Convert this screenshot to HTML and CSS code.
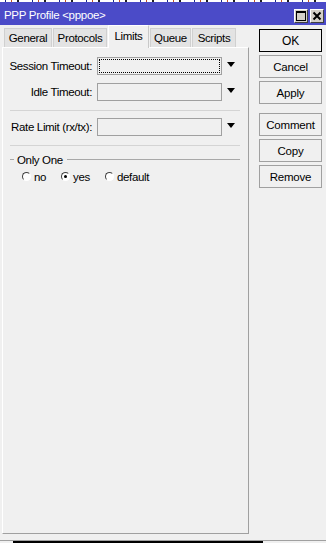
FILE: index.html
```html
<!DOCTYPE html>
<html>
<head>
<meta charset="utf-8">
<link rel="stylesheet" href="styles.css">
</head>
<body>
<div class="strip"></div>
<div class="titlebar">
  <span class="title">PPP Profile &lt;pppoe&gt;</span>
  <div class="tbtns">
    <span class="tbtn"><svg width="12" height="12" viewBox="0 0 12 12"><rect x="1.5" y="1.5" width="9" height="9" fill="none" stroke="#000" stroke-width="1"/><rect x="1" y="1" width="10" height="2" fill="#000"/></svg></span>
    <span class="tbtn"><svg width="12" height="12" viewBox="0 0 12 12"><path d="M2.5 2.5 L9.5 9.5 M9.5 2.5 L2.5 9.5" stroke="#000" stroke-width="2"/></svg></span>
  </div>
</div>
<div class="main">
  <div class="left">
    <div class="tabs">
      <span class="tab t-general">General</span>
      <span class="tab t-proto">Protocols</span>
      <span class="tab sel t-limits">Limits</span>
      <span class="tab t-queue">Queue</span>
      <span class="tab t-scripts">Scripts</span>
    </div>
    <div class="panel">
      <div class="row r1">
        <span class="label">Session Timeout:</span>
        <span class="field"><span class="focus"></span></span>
        <span class="arrow"></span>
      </div>
      <div class="row r2">
        <span class="label">Idle Timeout:</span>
        <span class="field"></span>
        <span class="arrow"></span>
      </div>
      <div class="sep s1"></div>
      <div class="row r3">
        <span class="label">Rate Limit (rx/tx):</span>
        <span class="field"></span>
        <span class="arrow"></span>
      </div>
      <div class="sep s2"></div>
      <div class="group">
        <span class="gl-left"></span>
        <span class="gtext">Only One</span>
        <span class="gl-right"></span>
      </div>
      <div class="radios">
        <span class="radio"><span class="dot"></span>no</span>
        <span class="radio"><span class="dot on"></span>yes</span>
        <span class="radio"><span class="dot"></span>default</span>
      </div>
    </div>
  </div>
  <div class="buttons">
    <span class="btn ok">OK</span>
    <span class="btn">Cancel</span>
    <span class="btn">Apply</span>
    <span class="btn gap">Comment</span>
    <span class="btn">Copy</span>
    <span class="btn">Remove</span>
  </div>
</div>
<div class="behind"><div class="bwin"></div></div>
</body>
</html>
```

FILE: styles.css
```css
* { box-sizing: border-box; }
html, body { margin: 0; padding: 0; }
body {
  width: 326px;
  height: 543px;
  overflow: hidden;
  background: #f0f0f0;
  font-family: "Liberation Sans", Arial, sans-serif;
  font-size: 11px;
  letter-spacing: -0.2px;
  color: #000;
}
.strip {
  height: 2px;
  background: repeating-linear-gradient(90deg, #fff 0 5px, #1a2a8a 5px 6px, #fff 6px 11px, #c05020 11px 12px, #fff 12px 17px, #202020 17px 19px, #fff 19px 27px);
}
.titlebar {
  height: 23px;
  background: #4b4bc8;
  display: flex;
  align-items: center;
  justify-content: space-between;
  padding: 0 2px 0 4px;
}
.title {
  color: #fff;
  font-size: 11.5px;
  letter-spacing: -0.3px;
  padding-top: 2px;
}
.tbtns { display: flex; gap: 2px; padding-top: 4px; }
.tbtn {
  width: 14px;
  height: 14px;
  background: #d4d0c8;
  border: 1px solid;
  border-color: #fff #404040 #404040 #fff;
  display: flex;
  align-items: center;
  justify-content: center;
}
.main {
  display: flex;
  height: 515px;
}
.left {
  width: 247px;
  margin-left: 2px;
  display: flex;
  flex-direction: column;
}
.tabs {
  height: 22px;
  display: flex;
  align-items: flex-end;
  padding-left: 2px;
  position: relative;
  z-index: 1;
}
.tab {
  height: 19px;
  background: #e3e3e3;
  border: 1px solid #d0d0d0;
  border-bottom: none;
  display: flex;
  align-items: center;
  justify-content: center;
  margin-right: 1px;
  font-size: 11.5px;
  letter-spacing: -0.35px;
}
.tab.sel {
  height: 23px;
  margin-bottom: -1px;
  background: #f0f0f0;
  border-color: #fff #c8c8c8 #f0f0f0 #fff;
  padding-bottom: 3px;
}
.t-general { width: 48px; }
.t-proto { width: 54px; }
.t-limits { width: 41px; }
.t-queue { width: 41px; }
.t-scripts { width: 44px; }
.panel {
  height: 487px;
  border: 1px solid;
  border-color: #fff #a0a0a0 #a0a0a0 #fff;
  padding-top: 9px;
  display: flex;
  flex-direction: column;
}
.row {
  display: flex;
  align-items: center;
  height: 18px;
}
.r2 { margin-top: 8px; }
.r3 { margin-top: 7px; }
.label {
  width: 89px;
  text-align: right;
  white-space: nowrap;
  font-size: 11.5px;
  letter-spacing: -0.35px;
}
.field {
  margin-left: 5px;
  width: 125px;
  height: 18px;
  background: #f0f0f0;
  border: 1px solid #a0a0a0;
  padding: 1px;
}
.focus {
  display: block;
  width: 100%;
  height: 100%;
  border: 1px dotted #000;
}
.arrow {
  margin-left: 5px;
  margin-bottom: 3px;
  width: 0;
  height: 0;
  border-left: 4.5px solid transparent;
  border-right: 4.5px solid transparent;
  border-top: 5px solid #000;
}
.sep {
  margin-left: 7px;
  width: 230px;
  height: 1px;
  background: #d4d4d4;
}
.s1 { margin-top: 9px; }
.s2 { margin-top: 9px; }
.group {
  margin-top: 7px;
  height: 13px;
  display: flex;
  align-items: center;
  margin-left: 7px;
  width: 230px;
  font-size: 11.5px;
  letter-spacing: -0.35px;
}
.gl-left { width: 4px; height: 1px; background: #a8a8a8; }
.gtext { margin: 0 4px 0 3px; }
.gl-right { flex: 1; height: 1px; background: #a8a8a8; }
.radios {
  margin-top: 4px;
  margin-left: 19px;
  height: 13px;
  display: flex;
  align-items: center;
  gap: 15px;
  font-size: 11.5px;
  letter-spacing: -0.35px;
}
.radio { display: flex; align-items: center; gap: 3px; }
.dot {
  width: 9px;
  height: 9px;
  border-radius: 50%;
  border: 1px solid;
  border-color: #404040 #fff #fff #404040;
  background: #fff;
  display: flex;
  align-items: center;
  justify-content: center;
}
.dot.on::after {
  content: "";
  width: 3px;
  height: 3px;
  border-radius: 50%;
  background: #000;
}
.buttons {
  margin-left: 10px;
  padding-top: 4px;
  display: flex;
  flex-direction: column;
  gap: 3px;
}
.btn {
  width: 63px;
  height: 23px;
  border: 1px solid #a0a0a0;
  background: #f0f0f0;
  display: flex;
  align-items: center;
  justify-content: center;
  font-size: 11.5px;
}
.btn.ok {
  border: 1px solid #000;
  box-shadow: inset 0 0 0 1px #f0f0f0;
  font-size: 12px;
}
.btn.gap { margin-top: 6px; }
.behind {
  height: 3px;
  border-top: 1px solid #a0a0a0;
}
.bwin {
  margin-left: 13px;
  width: 250px;
  height: 2px;
  border-left: 1px solid #000;
  border-top: 2px solid #000;
}
```
